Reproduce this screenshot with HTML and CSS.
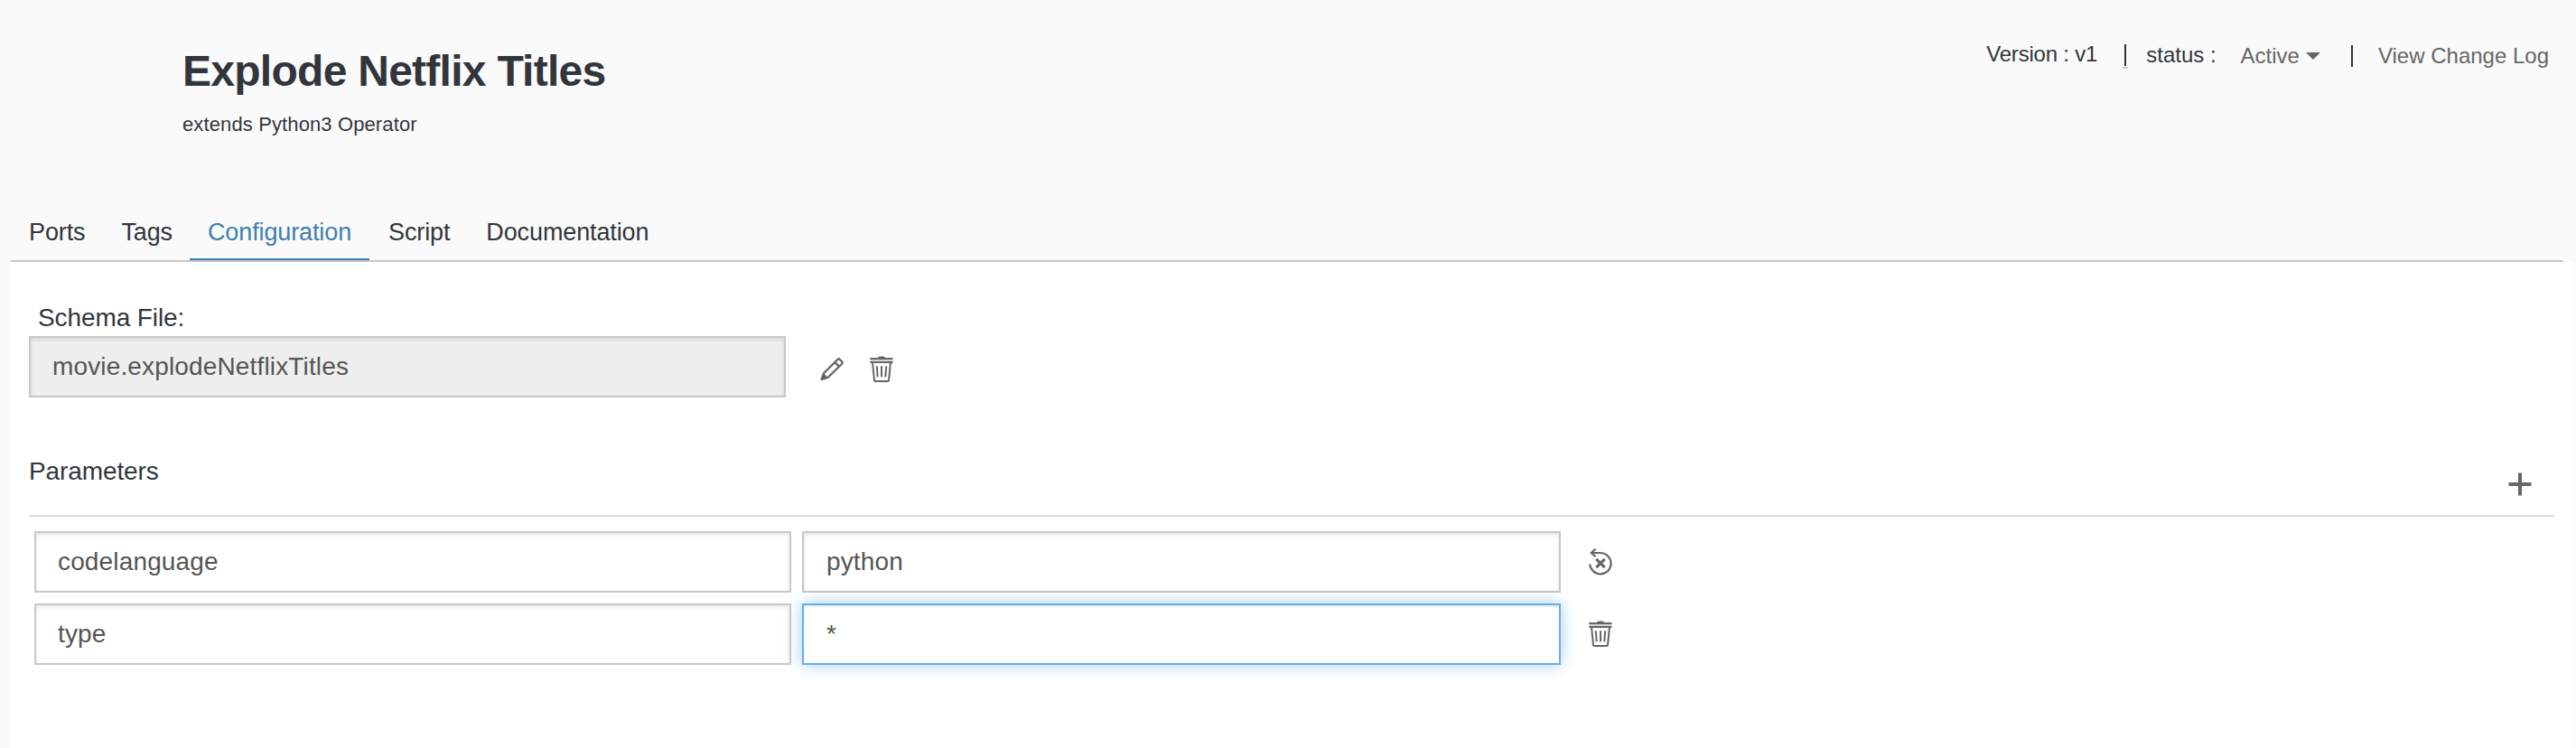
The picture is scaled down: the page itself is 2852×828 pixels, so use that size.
FILE: index.html
```html
<!DOCTYPE html>
<html lang="en">
<head>
<meta charset="utf-8">
<title>Explode Netflix Titles</title>
<link rel="stylesheet" href="styles.css">
</head>
<body>
<svg class="defs" width="0" height="0" aria-hidden="true">
  <symbol id="trash" viewBox="0 0 26 30">
    <path d="M8.500 3q.5-2 2.500-2.400h4q2 .4 2.500 2.400z" fill="#666"/>
    <path d="M.3 3h25.200M.3 7h25.200" stroke="#666" stroke-width="2"/>
    <path d="M.3 5h25.200" stroke="#d4d4d4" stroke-width="2"/>
    <path d="M3 7 5 27.200q.1.900 1 .9h14q.9 0 1-.9L23 7M7.800 11.300l.9 12M13 11.300v12M18.200 11.300l-.9 12" fill="none" stroke="#666" stroke-width="2"/>
  </symbol>
</svg>
<header class="header">
  <div class="heading">
    <h1 class="title">Explode Netflix Titles</h1>
    <p class="subtitle">extends Python3 Operator</p>
  </div>
  <div class="meta">
    <span class="version">Version : v1</span>
    <span class="divider divider-marked"></span>
    <span class="status-label">status :</span>
    <a class="status">Active<span class="caret"></span></a>
    <span class="divider divider-low"></span>
    <a class="log">View Change Log</a>
  </div>
</header>
<nav class="tabs">
  <a class="tab">Ports</a>
  <a class="tab">Tags</a>
  <a class="tab active">Configuration</a>
  <a class="tab">Script</a>
  <a class="tab">Documentation</a>
</nav>
<main class="panel">
  <label class="schema-label" for="schema">Schema File:</label>
  <div class="schema-row">
    <input id="schema" class="field" value="movie.explodeNetflixTitles" disabled>
    <svg class="icon pencil" width="28" height="28" viewBox="0 0 28 28" fill="none" stroke="#666" stroke-width="2.300" stroke-linejoin="round"><path d="M2.600 25 5 18.200 20.500 2.700q1-.8 2 0L25.300 5.500q.8 1 0 2L9.500 23zM17.300 5.900l4.800 4.800"/><path d="M2.600 25 4.800 18.600l4.500 4.500z" fill="#666" stroke-width="1"/></svg>
    <svg class="icon trash" width="26" height="30"><use href="#trash"/></svg>
  </div>
  <div class="params-head">
    <h2 class="params-title">Parameters</h2>
    <svg class="plus" width="26" height="26" viewBox="0 0 26 26"><path d="M13 .5v25M.5 13h25" stroke="#666" stroke-width="4"/></svg>
  </div>
  <div class="params">
    <div class="param">
      <input class="field" value="codelanguage">
      <input class="field value" value="python">
      <svg class="icon" width="26" height="30" viewBox="0 0 26 30" fill="none" stroke="#666" stroke-width="2.200"><path d="M1.200 17.500A11.700 11.700 0 1 0 13 5H2.500M7.500 .8 2.800 5l4.700 4.300"/><path d="m8.300 11.800 9.400 9.400m0-9.400-9.400 9.400" stroke-width="3.200"/></svg>
    </div>
    <div class="param">
      <input class="field" value="type">
      <input class="field value focused" value="*">
      <svg class="icon" width="26" height="30"><use href="#trash"/></svg>
    </div>
  </div>
</main>
</body>
</html>
```
FILE: styles.css
```css
* { box-sizing: border-box; }
body {
  margin: 0;
  height: 828px;
  display: flex;
  flex-direction: column;
  overflow: hidden;
  background: #fafafa;
  color: #32363c;
  font-family: "Liberation Sans", Arial, sans-serif;
  font-size: 28px;
}
.defs { display: none; }
.header {
  height: 236px;
  flex: none;
  display: flex;
  justify-content: space-between;
  padding: 0 30px 0 202px;
}
.heading { padding-top: 51px; }
.title { margin: 0; font-size: 48px; line-height: 56px; font-weight: 700; letter-spacing: -0.73px; }
.subtitle { margin: 16px 0 0; font-size: 22px; line-height: 30px; letter-spacing: 0.12px; }
.meta { display: flex; align-items: flex-start; padding-top: 44px; font-size: 24px; line-height: 32px; white-space: nowrap; }
.version { letter-spacing: -0.2px; }
.divider { width: 2px; height: 24px; margin: 5px 22px 0 30px; background: #32363c; }
.divider-marked { position: relative; }
.divider-marked::after { content: ""; position: absolute; left: -2px; top: 25px; width: 6px; height: 2px; background: #ccc; }
.status-label { padding-top: 1px; }
.status, .log { padding-top: 2px; color: #666; }
.status { margin-left: 27px; display: flex; }
.caret { margin: 12px 4px 0 7px; width: 16px; height: 8px; background: #666; clip-path: polygon(0 0, 100% 0, 50% 100%); }
.divider-low { margin: 6px 28px 0 30px; }
.tabs {
  height: 54px;
  flex: none;
  display: flex;
  margin: 0 14px 0 12px;
  border-bottom: 2px solid #c8c8c8;
}
.tab { padding: 1px 20px 0; font-size: 27px; line-height: 40px; letter-spacing: -0.12px; }
.tab.active { margin: 0 1px 0 -1px; color: #3f7fb1; border-bottom: 2px solid #3f7fb1; }
.panel { flex: 1; margin: 0 4px 0 12px; padding: 46px 20px 0; background: #fff; }
.schema-label { display: block; padding-left: 10px; line-height: 32px; letter-spacing: -0.1px; }
.schema-row { display: flex; margin-top: 4px; }
.field {
  width: 838px;
  height: 68px;
  padding: 0 24px;
  border: 2px solid #c8c8c8;
  border-radius: 0;
  outline: 0;
  background: #fff;
  color: #555;
  font: inherit;
  letter-spacing: 0.15px;
  box-shadow: inset 0 2px 4px rgba(0, 0, 0, .1);
}
.field:disabled { background: #eee; }
.pencil { margin: 23px 0 0 37px; }
.trash { margin: 22px 0 0 28px; }
.params-head {
  display: flex;
  justify-content: space-between;
  height: 66px;
  margin-top: 66px;
  border-bottom: 2px solid #dcdcdc;
}
.params-title { margin: 0; font-size: 28px; font-weight: 400; line-height: 32px; letter-spacing: -0.1px; }
.plus { margin: 17px 25px 0 0; }
.params { display: flex; flex-direction: column; gap: 12px; padding: 16px 6px; }
.param { display: flex; }
.value { width: 840px; margin-left: 12px; padding: 0 25px; }
.focused { border-color: #66afe9; box-shadow: inset 0 2px 2px rgba(0, 0, 0, .075), 0 0 16px rgba(102, 175, 233, .6); }
.param .icon { margin: 19px 0 0 31px; }
```
